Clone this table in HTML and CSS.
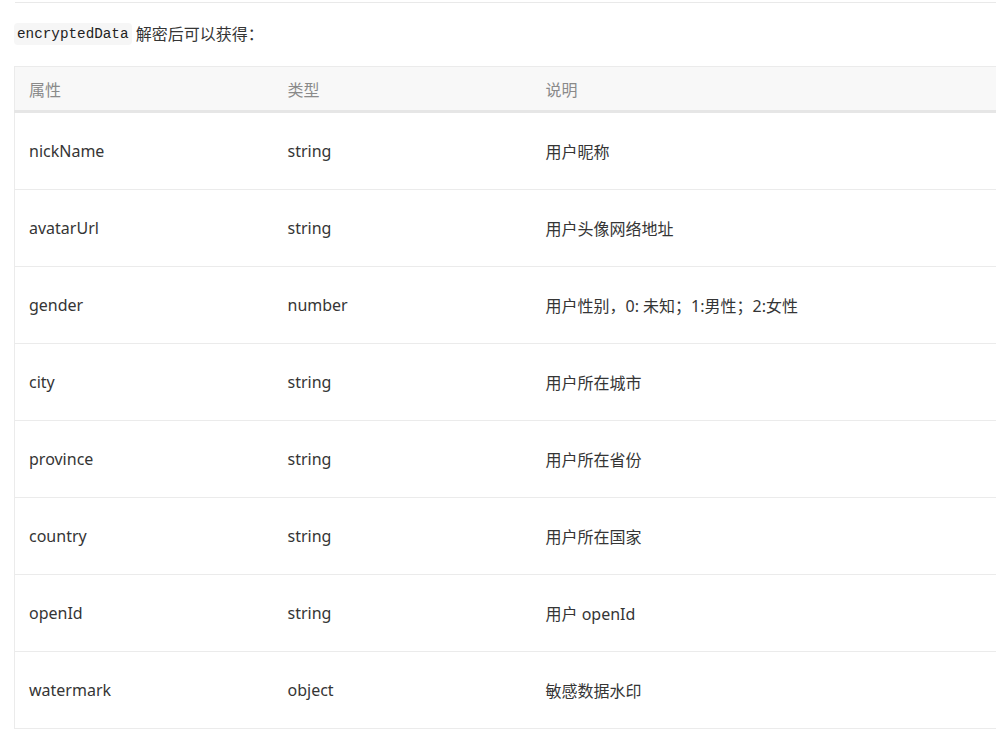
FILE: index.html
```html
<!DOCTYPE html>
<html lang="zh">
<head>
<meta charset="utf-8">
<link rel="stylesheet" href="styles.css">
</head>
<body>
<div class="page">
  <div class="prev"></div>
  <p class="intro"><code class="code">encryptedData</code> 解密后可以获得：</p>
  <table class="tbl">
    <colgroup><col class="c1"><col class="c2"><col class="c3"></colgroup>
    <thead>
      <tr><th>属性</th><th>类型</th><th>说明</th></tr>
    </thead>
    <tbody>
      <tr><td>nickName</td><td>string</td><td>用户昵称</td></tr>
      <tr><td>avatarUrl</td><td>string</td><td>用户头像网络地址</td></tr>
      <tr><td>gender</td><td>number</td><td>用户性别，0: 未知；1:男性；2:女性</td></tr>
      <tr><td>city</td><td>string</td><td>用户所在城市</td></tr>
      <tr><td>province</td><td>string</td><td>用户所在省份</td></tr>
      <tr><td>country</td><td>string</td><td>用户所在国家</td></tr>
      <tr><td>openId</td><td>string</td><td>用户 openId</td></tr>
      <tr><td>watermark</td><td>object</td><td>敏感数据水印</td></tr>
    </tbody>
  </table>
</div>
</body>
</html>
```
FILE: styles.css
```css
html, body {
  margin: 0;
  padding: 0;
  background: #ffffff;
}
body {
  font-family: "Noto Sans", "Noto Sans CJK SC", sans-serif;
  font-size: 16px;
  color: #353535;
  overflow: hidden;
}
.page {
  padding-left: 14px;
}
.prev {
  margin-left: 1px;
  height: 2px;
  border-bottom: 1px solid #e9e9e9;
}
.intro {
  margin: 20px 0 0 0;
  line-height: 22px;
  height: 22px;
  font-size: 16px;
  color: #353535;
}
.code {
  display: inline-block;
  height: 22px;
  line-height: 22px;
  padding: 0 3px;
  background: #f6f6f6;
  border-radius: 4px;
  font-family: "Liberation Mono", "DejaVu Sans Mono", monospace;
  font-size: 14.3px;
  color: #222;
  vertical-align: top;
}
.tbl {
  margin-top: 21px;
  width: 982px;
  border-collapse: collapse;
  border-left: 1px solid #ebebeb;
  border-top: 1px solid #ebebeb;
  table-layout: fixed;
}
.c1 { width: 259px; }
.c2 { width: 258px; }
.tbl th {
  height: 43px;
  padding: 0 14px;
  text-align: left;
  font-weight: normal;
  color: #8a8a8a;
  background: #f8f8f8;
  border-bottom: 3px solid #e6e6e6;
}
.tbl td {
  height: 76px;
  padding: 0 14px;
  border-bottom: 1px solid #ebebeb;
  vertical-align: middle;
}
```
